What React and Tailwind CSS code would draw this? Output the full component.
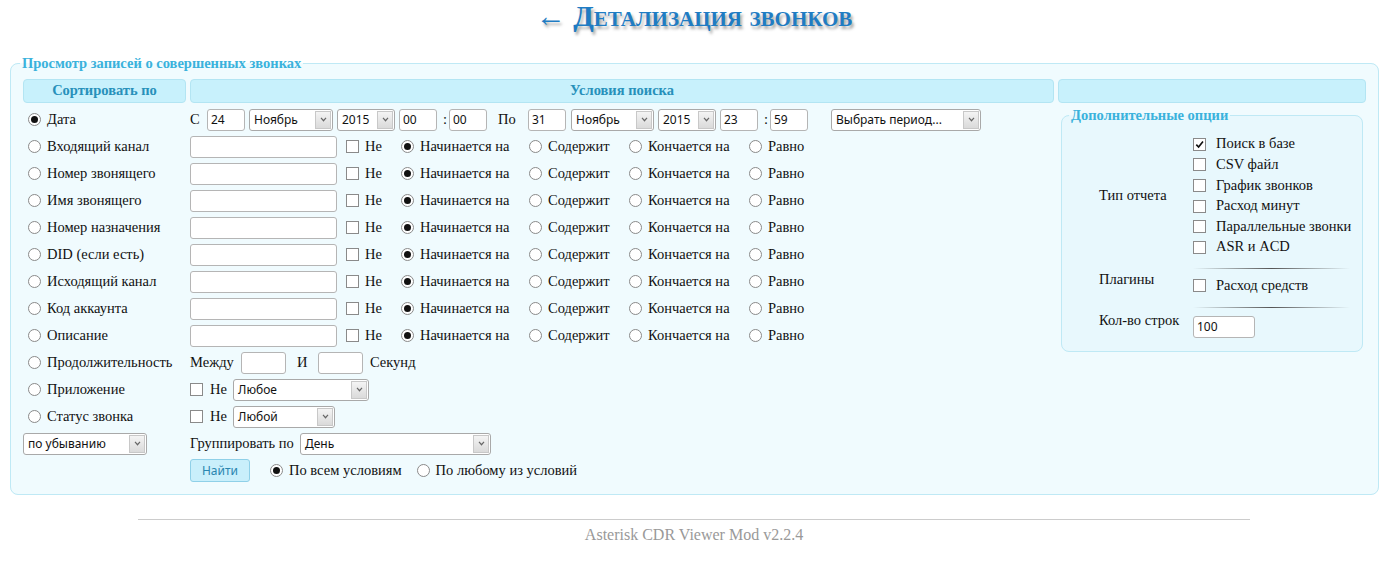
import React from 'react';

const fieldRows = [
  'Входящий канал',
  'Номер звонящего',
  'Имя звонящего',
  'Номер назначения',
  'DID (если есть)',
  'Исходящий канал',
  'Код аккаунта',
  'Описание',
];

const reportTypes = [
  { label: 'Поиск в базе', checked: true },
  { label: 'CSV файл' },
  { label: 'График звонков' },
  { label: 'Расход минут' },
  { label: 'Параллельные звонки' },
  { label: 'ASR и ACD' },
];

function Radio({ checked }) {
  return (
    <span className="inline-flex h-[13px] w-[13px] shrink-0 items-center justify-center rounded-full border border-[#8a8a8a] bg-white">
      {checked && <span className="h-[7px] w-[7px] rounded-full bg-[#111]" />}
    </span>
  );
}

function Check({ checked }) {
  return (
    <span className="inline-flex h-[13px] w-[13px] shrink-0 items-center justify-center border border-[#8a8a8a] bg-white">
      {checked && (
        <svg viewBox="0 0 12 12" className="h-[11px] w-[11px]">
          <path d="M2.5 6.2 L5 8.7 L9.8 2.8" fill="none" stroke="#111" strokeWidth="1.8" />
        </svg>
      )}
    </span>
  );
}

function Input({ className = '', value = '' }) {
  return (
    <span className={`flex h-[22px] shrink-0 items-center rounded-[3px] border border-[#b5b5b5] bg-white pl-[3px] font-['Noto_Sans'] text-[12px] text-[#111] ${className}`}>
      {value}
    </span>
  );
}

function Select({ className = '', children }) {
  return (
    <span className={`flex h-[22px] shrink-0 items-center rounded-[3px] border border-[#a9a9a9] bg-white ${className}`}>
      <span className="flex-1 truncate pl-[4px] font-['Noto_Sans'] text-[12px] text-[#111]">{children}</span>
      <span className="mr-[1px] flex h-[18px] w-[16px] items-center justify-center border border-[#c8c8c8] bg-gradient-to-b from-[#f4f4f4] to-[#dadada]">
        <svg viewBox="0 0 8 6" className="h-[5px] w-[7px]">
          <path d="M1 1 L4 4.5 L7 1" fill="none" stroke="#666" strokeWidth="1.4" />
        </svg>
      </span>
    </span>
  );
}

function LeftLabel({ checked, children }) {
  return (
    <div className="flex items-center gap-[6px] pl-[5px]">
      <Radio checked={checked} />
      <span>{children}</span>
    </div>
  );
}

function Row({ left, children }) {
  return (
    <div className="grid h-[27px] grid-cols-[163px_864px] items-center gap-x-[4px]">
      <div>{left}</div>
      <div className="flex items-center">{children}</div>
    </div>
  );
}

function Separator() {
  return <div className="ml-[124px] h-px w-[157px] bg-gradient-to-r from-transparent via-[#555] to-transparent" />;
}

export default function App() {
  return (
    <div className="min-h-[561px] bg-white font-['Liberation_Serif',serif] text-[14.5px] text-[#111]">
      <h1 className="h-[36px] text-center text-[30px] font-bold leading-[32px] text-[#1f7cc3] [font-variant:small-caps] [text-shadow:2px_3px_3px_rgba(0,0,0,0.35)]">
        ← Детализация звонков
      </h1>

      <fieldset className="mx-[10px] mt-[18px] rounded-[8px] border border-[#bfe9f5] bg-[#f0fbfe] px-[12px] pb-[10px] pt-[7px]">
        <legend className="-ml-[3px] px-[2px] text-[14.5px] font-bold leading-[18px] text-[#3ab2dc]">
          Просмотр записей о совершенных звонках
        </legend>

        <div className="grid h-[22px] grid-cols-[163px_864px_308px] gap-x-[4px] text-[14.5px] font-bold text-[#2790ba]">
          <div className="flex items-center justify-center rounded-[4px] border border-[#b3e5f3] bg-[#c8f1fc]">Сортировать по</div>
          <div className="flex items-center justify-center rounded-[4px] border border-[#b3e5f3] bg-[#c8f1fc]">Условия поиска</div>
          <div className="rounded-[4px] border border-[#b3e5f3] bg-[#c8f1fc]" />
        </div>

        <div className="mt-[5px] flex items-start gap-x-[4px]">
          <div className="w-[1031px]">
            <Row left={<LeftLabel checked>Дата</LeftLabel>}>
              <span className="w-[17px]">С</span>
              <Input className="w-[38px]" value="24" />
              <Select className="ml-[4px] w-[84px]">Ноябрь</Select>
              <Select className="ml-[4px] w-[58px]">2015</Select>
              <Input className="ml-[4px] w-[38px]" value="00" />
              <span className="w-[12px] pl-[6px]">:</span>
              <Input className="w-[38px]" value="00" />
              <span className="ml-[11px] w-[30px]">По</span>
              <Input className="w-[38px]" value="31" />
              <Select className="ml-[5px] w-[83px]">Ноябрь</Select>
              <Select className="ml-[4px] w-[58px]">2015</Select>
              <Input className="ml-[4px] w-[38px]" value="23" />
              <span className="w-[12px] pl-[6px]">:</span>
              <Input className="w-[38px]" value="59" />
              <Select className="ml-[23px] w-[150px]">Выбрать период...</Select>
            </Row>

            {fieldRows.map((label) => (
              <Row key={label} left={<LeftLabel>{label}</LeftLabel>}>
                <Input className="w-[147px]" />
                <span className="ml-[9px] flex w-[55px] items-center gap-[6px]">
                  <Check />
                  Не
                </span>
                <span className="flex w-[128px] items-center gap-[6px]">
                  <Radio checked />
                  Начинается на
                </span>
                <span className="flex w-[100px] items-center gap-[6px]">
                  <Radio />
                  Содержит
                </span>
                <span className="flex w-[120px] items-center gap-[6px]">
                  <Radio />
                  Кончается на
                </span>
                <span className="flex items-center gap-[6px]">
                  <Radio />
                  Равно
                </span>
              </Row>
            ))}

            <Row left={<LeftLabel>Продолжительность</LeftLabel>}>
              <span className="w-[51px]">Между</span>
              <Input className="w-[45px]" />
              <span className="w-[32px] pl-[11px]">И</span>
              <Input className="w-[45px]" />
              <span className="ml-[7px]">Секунд</span>
            </Row>

            <Row left={<LeftLabel>Приложение</LeftLabel>}>
              <Check />
              <span className="ml-[7px] w-[23px]">Не</span>
              <Select className="w-[136px]">Любое</Select>
            </Row>

            <Row left={<LeftLabel>Статус звонка</LeftLabel>}>
              <Check />
              <span className="ml-[7px] w-[23px]">Не</span>
              <Select className="w-[102px]">Любой</Select>
            </Row>

            <Row left={<Select className="w-[124px]">по убыванию</Select>}>
              <span className="w-[110px]">Группировать по</span>
              <Select className="w-[191px]">День</Select>
            </Row>

            <Row left={null}>
              <button className="h-[23px] w-[60px] rounded-[3px] border border-[#8fd0e8] bg-[#c9effb] font-['Noto_Sans'] text-[12px] text-[#2a86b0]">
                Найти
              </button>
              <span className="ml-[20px] flex items-center gap-[6px]">
                <Radio checked />
                По всем условиям
              </span>
              <span className="ml-[15px] flex items-center gap-[6px]">
                <Radio />
                По любому из условий
              </span>
            </Row>
          </div>

          <div className="w-[308px]">
            <fieldset className="ml-[3px] w-[302px] rounded-[8px] border border-[#bfe9f5] bg-[#e8f8fd] pb-[13px] pl-[7px] pt-[10px]">
              <legend className="px-[2px] text-[14.5px] font-bold leading-[18px] text-[#3ab2dc]">Дополнительные опции</legend>

              <div className="flex">
                <div className="flex w-[124px] items-center pl-[30px]">Тип отчета</div>
                <div>
                  {reportTypes.map((t) => (
                    <div key={t.label} className="flex h-[20.6px] items-center gap-[10px]">
                      <Check checked={t.checked} />
                      {t.label}
                    </div>
                  ))}
                </div>
              </div>

              <div className="mt-[10px]">
                <Separator />
              </div>

              <div className="flex items-start">
                <div className="w-[124px] pl-[30px] pt-[1px] leading-[18px]">Плагины</div>
                <div className="mt-[7px] flex h-[20px] items-center gap-[10px]">
                  <Check />
                  Расход средств
                </div>
              </div>

              <div className="mt-[11px]">
                <Separator />
              </div>

              <div className="flex items-start">
                <div className="w-[124px] pl-[30px] pt-[3px] leading-[18px]">Кол-во строк</div>
                <Input className="mt-[8px] w-[62px]" value="100" />
              </div>
            </fieldset>
          </div>
        </div>
      </fieldset>

      <div className="mx-auto mt-[24px] h-px w-[1112px] bg-[#cccccc]" />
      <div className="mt-[5px] text-center text-[16px] leading-[20px] text-[#999]">Asterisk CDR Viewer Mod v2.2.4</div>
    </div>
  );
}
